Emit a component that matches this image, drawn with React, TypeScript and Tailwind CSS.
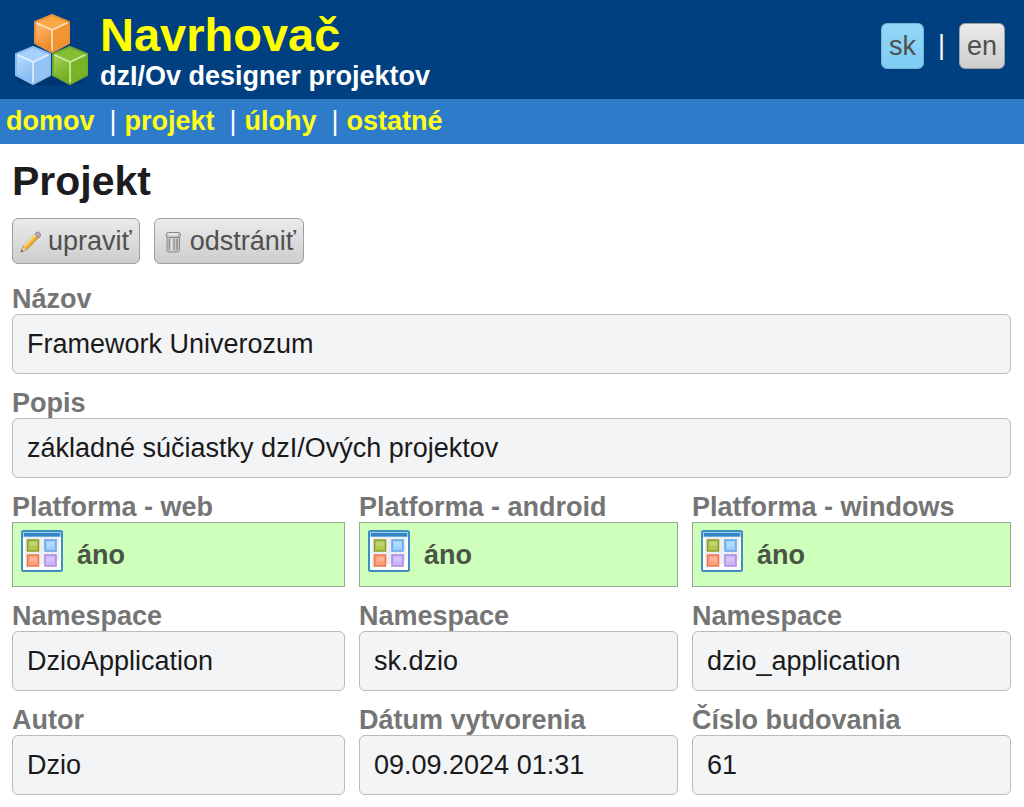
import { clsx } from "clsx";
import { Fragment, useId } from "react";
import type { ReactNode } from "react";

const navItems = [
  { id: "home", label: "domov" },
  { id: "project", label: "projekt" },
  { id: "tasks", label: "úlohy" },
  { id: "other", label: "ostatné" },
];

const platforms = [
  { id: "web", label: "Platforma - web", namespace: "DzioApplication" },
  { id: "android", label: "Platforma - android", namespace: "sk.dzio" },
  { id: "windows", label: "Platforma - windows", namespace: "dzio_application" },
];

const details = [
  { id: "author", label: "Autor", value: "Dzio" },
  { id: "created", label: "Dátum vytvorenia", value: "09.09.2024 01:31" },
  { id: "build", label: "Číslo budovania", value: "61" },
];

interface CubeProps {
  x: number;
  y: number;
  top: string;
  left: string;
  right: string;
  edge: string;
  outline: string;
}

function Cube({ x, y, top, left, right, edge, outline }: CubeProps) {
  return (
    <g transform={`translate(${x} ${y})`} strokeLinejoin="round">
      <path d="M2 8 19 16 19 38 2 29Z" fill={left} />
      <path d="M36 8 19 16 19 38 36 29Z" fill={right} />
      <path d="M19 1 36 8 19 16 2 8Z" fill={top} />
      <path d="M19 1 36 8 36 29 19 38 2 29 2 8Z" fill="none" stroke={outline} strokeWidth="2" />
      <path
        d="M4 9 19 16 34 9M19 16V36"
        fill="none"
        stroke={edge}
        strokeWidth="1.600"
        strokeLinecap="round"
        opacity="0.850"
      />
    </g>
  );
}

function Logo() {
  return (
    <svg viewBox="0 0 76 76" className="h-[76px] w-[76px] shrink-0" aria-hidden="true">
      <defs>
        <linearGradient id="orange" x1="0" y1="0" x2="0.500" y2="1">
          <stop offset="0" stopColor="#ffbd78" />
          <stop offset="1" stopColor="#f18a25" />
        </linearGradient>
        <linearGradient id="blue" x1="0" y1="0" x2="0.500" y2="1">
          <stop offset="0" stopColor="#bcdeff" />
          <stop offset="1" stopColor="#85baf0" />
        </linearGradient>
        <linearGradient id="green" x1="0" y1="0" x2="0.500" y2="1">
          <stop offset="0" stopColor="#a6d35a" />
          <stop offset="1" stopColor="#72ad1e" />
        </linearGradient>
      </defs>
      <ellipse cx="38" cy="69" rx="34" ry="5" fill="#00285c" opacity="0.400" />
      <Cube x={20} y={2} top="#fba746" left="url(#orange)" right="#f39432" edge="#fff0da" outline="#e8913c" />
      <Cube x={1} y={34} top="#a5d2fd" left="url(#blue)" right="#94c4f5" edge="#f4faff" outline="#8fbdeb" />
      <Cube x={38} y={34} top="#84bf33" left="url(#green)" right="#79b428" edge="#e2f8bb" outline="#73a92c" />
    </svg>
  );
}

function PencilIcon() {
  return (
    <svg viewBox="0 0 22 22" className="mt-[2px] h-[22px] w-[22px] shrink-0" aria-hidden="true">
      <path d="M1 21 3 15.500 16 2.500 19.500 5.500 6.500 19Z" fill="#f3b33d" stroke="#b98a45" strokeWidth="0.800" strokeLinejoin="round" />
      <path d="M4 15.500 16 3.500" stroke="#ffe29a" strokeWidth="1.500" />
      <path d="M6 18.500 18.500 6" stroke="#cd8828" strokeWidth="0.800" />
      <path d="M15 3 17 1Q21 1 20.500 5L19 7Z" fill="#bba6c0" stroke="#8d7790" strokeWidth="0.800" />
      <path d="M1 21 3 15.500 6.500 19Z" fill="#f3dcb4" stroke="#a98a5c" strokeWidth="0.600" />
      <path d="M1 21 1.800 18.600 3.300 20.200Z" fill="#4b4640" />
    </svg>
  );
}

function TrashIcon() {
  return (
    <svg viewBox="0 0 22 22" className="mt-[2px] h-[22px] w-[22px] shrink-0" aria-hidden="true">
      <path d="M5 5V19Q5 21 7.500 21H15Q17.500 21 17.500 19V5Z" fill="#c4c4c4" stroke="#8c8c8c" />
      <path d="M7.500 8V19M15 8V19" stroke="#929292" strokeWidth="1.500" />
      <path d="M9.500 8V19.500" stroke="#ededed" strokeWidth="1.500" />
      <path d="M12 8V19" stroke="#a2a2a2" strokeWidth="1.500" />
      <rect x="4" y="1.500" width="14.500" height="5" rx="2.500" fill="#c9c9c9" stroke="#8a8a8a" />
      <ellipse cx="11" cy="3.300" rx="5" ry="1" fill="#efefef" />
    </svg>
  );
}

function WindowIcon() {
  return (
    <svg viewBox="0 0 42 42" className="h-[42px] w-[42px] shrink-0" aria-hidden="true">
      <rect x="1" y="1" width="40" height="40" rx="1.500" fill="#fff" stroke="#3f8ec0" strokeWidth="2" />
      <path d="M2 2H40V7H2Z" fill="#9fd0f3" />
      <path d="M3 3H39V6.500H3Z" fill="#3385c6" />
      <path d="M4 7H38V38H4Z" fill="#eceef3" />
      <path d="M4 38H38V30Q20 34 4 38Z" fill="#fff" />
      <rect x="6.500" y="10" width="11" height="11" fill="#b4c950" stroke="#879f29" strokeWidth="1.500" />
      <rect x="24" y="10" width="11" height="11" fill="#9fd2ff" stroke="#62a5e4" strokeWidth="1.500" />
      <rect x="6.500" y="25" width="11" height="11" fill="#ffa17d" stroke="#ee774f" strokeWidth="1.500" />
      <rect x="24" y="25" width="11" height="11" fill="#d0b6fa" stroke="#ab89e2" strokeWidth="1.500" />
      <path
        d="M9 12H16V16H9ZM26 12H33V16H26ZM9 27H16V31H9ZM26 27H33V31H26Z"
        fill="#fff"
        opacity="0.200"
      />
    </svg>
  );
}

interface ButtonProps {
  children: ReactNode;
  active?: boolean;
}

function Button({ children, active = false }: ButtonProps) {
  return (
    <button
      type="button"
      className={clsx(
        "flex h-[46px] items-center gap-[6px] rounded-md border px-[7px] text-[27px] leading-[30px] text-[#505050]",
        active
          ? "border-[#7ab4d2] bg-linear-to-b from-[#93d7f7] to-[#7dcdf3]"
          : "border-[#9f9f9f] bg-linear-to-b from-[#ebebeb] to-[#cdcdcd]",
      )}
    >
      {children}
    </button>
  );
}

const labelClass = "block text-[27px] leading-[30px] font-bold text-[#757575]";

function Field({ label, value }: { label: string; value: string }) {
  const id = useId();
  return (
    <div className="min-w-0">
      <label htmlFor={id} className={labelClass}>
        {label}
      </label>
      <input
        id={id}
        readOnly
        value={value}
        className="block h-[60px] w-full rounded-md border border-[#b9bbbd] bg-[#f3f4f6] px-[14px] text-[27px] text-[#1a1a1a]"
      />
    </div>
  );
}

function PlatformField({ label }: { label: string }) {
  const id = useId();
  return (
    <div className="min-w-0">
      <label htmlFor={id} className={labelClass}>
        {label}
      </label>
      <output
        id={id}
        className="flex h-[65px] items-start gap-[14px] border border-[#9aa893] bg-[#ceffbb] px-2 pt-[7px] text-[27px] font-bold text-[#4a5545]"
      >
        <WindowIcon />
        <span className="pt-[3px] leading-[44px]">áno</span>
      </output>
    </div>
  );
}

export default function App() {
  return (
    <div className="min-h-screen bg-white font-['Liberation_Sans',Arial,sans-serif] text-[27px]">
      <header className="flex h-[99px] items-center justify-between bg-[#003f80] pr-[19px] pl-[13px]">
        <div className="flex items-center gap-[11px]">
          <Logo />
          <div className="font-bold">
            <div className="text-[47px] leading-[52px] text-[#ffff00]">Navrhovač</div>
            <div className="leading-[30px] text-white">dzI/Ov designer projektov</div>
          </div>
        </div>
        <div className="flex items-center gap-[14px] pb-2 text-white">
          <Button active>sk</Button>
          <span>|</span>
          <Button>en</Button>
        </div>
      </header>

      <nav className="flex h-[45px] items-center bg-[#2e7bca] px-[6px]">
        {navItems.map((item, i) => (
          <Fragment key={item.id}>
            {i > 0 && <span className="pr-2 pl-[15px] text-white">|</span>}
            <a href={`#${item.id}`} className="font-bold text-[#ffff1a]">
              {item.label}
            </a>
          </Fragment>
        ))}
      </nav>

      <main className="pt-[14px] pr-[13px] pb-3 pl-3">
        <h1 className="text-[41px] leading-[46px] font-bold text-[#1d1d1f]">Projekt</h1>
        <div className="mt-[14px] flex gap-[14px]">
          <Button>
            <PencilIcon />
            upraviť
          </Button>
          <Button>
            <TrashIcon />
            odstrániť
          </Button>
        </div>

        <form className="mt-5 flex flex-col gap-[14px]">
          <Field label="Názov" value="Framework Univerozum" />
          <Field label="Popis" value="základné súčiastky dzI/Ových projektov" />
          <div className="grid grid-cols-[333fr_319fr_319fr] gap-[14px]">
            {platforms.map((p) => (
              <PlatformField key={p.id} label={p.label} />
            ))}
            {platforms.map((p) => (
              <Field key={p.id} label="Namespace" value={p.namespace} />
            ))}
            {details.map((d) => (
              <Field key={d.id} label={d.label} value={d.value} />
            ))}
          </div>
        </form>
      </main>
    </div>
  );
}
